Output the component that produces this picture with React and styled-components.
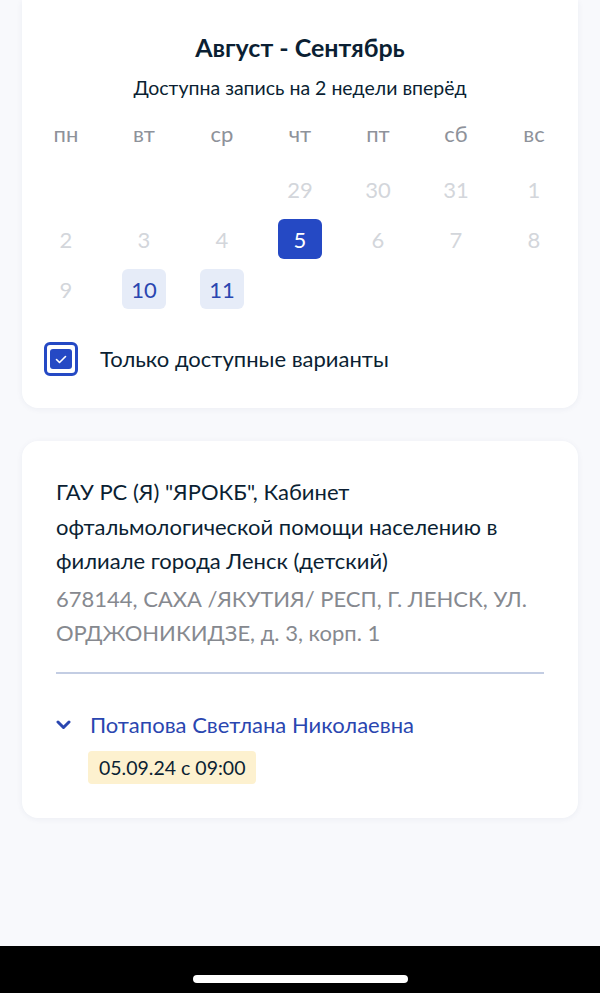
import React from 'react';
import styled, { createGlobalStyle } from 'styled-components';

const GlobalStyle = createGlobalStyle`
  html, body {
    margin: 0;
    padding: 0;
    background: #f8f9fc;
  }
  body {
    font-family: Lato, "Noto Sans", sans-serif;
    color: #0b1f33;
  }
`;

const Screen = styled.div`
  display: flex;
  flex-direction: column;
  height: 993px;
  background: #f8f9fc;
  overflow: hidden;
`;

const Content = styled.div`
  flex: 1;
  display: flex;
  flex-direction: column;
  gap: 33px;
  padding: 0 22px;
`;

const Card = styled.div`
  background: #fff;
  border-radius: ${p => (p.$top ? '0 0 16px 16px' : '16px')};
  box-shadow: 0 1px 6px rgba(30, 50, 100, 0.06);
  padding: ${p => p.$pad};
`;

const Title = styled.div`
  font-size: 25px;
  font-weight: 700;
  line-height: 30px;
  text-align: center;
`;

const Subtitle = styled.div`
  margin-top: 13px;
  font-size: 19.5px;
  line-height: 26px;
  text-align: center;
`;

const Grid = styled.div`
  display: grid;
  grid-template-columns: repeat(7, 44px);
  justify-content: space-between;
  row-gap: 10px;
  margin-top: 20px;
`;

const WeekDay = styled.div`
  font-size: 22px;
  line-height: 26px;
  text-align: center;
  color: #8e929a;
  margin-bottom: 12px;
`;

const Day = styled.div`
  height: 40px;
  border-radius: 6px;
  display: flex;
  align-items: center;
  justify-content: center;
  font-size: 22px;
  color: ${p => (p.$state === 'selected' ? '#fff' : p.$state === 'open' ? '#2a46b0' : '#d3d6db')};
  background: ${p => (p.$state === 'selected' ? '#2549c4' : p.$state === 'open' ? '#e6ecf8' : 'transparent')};
`;

const CheckRow = styled.label`
  display: flex;
  align-items: center;
  gap: 22px;
  margin-top: 33px;
  font-size: 22px;
  line-height: 34px;
`;

const Box = styled.span`
  width: 34px;
  height: 34px;
  box-sizing: border-box;
  border: 3px solid #2549c4;
  border-radius: 6px;
  display: flex;
  align-items: center;
  justify-content: center;
`;

const BoxFill = styled.span`
  width: 22px;
  height: 20px;
  border-radius: 3px;
  background: #2549c4;
  display: flex;
  align-items: center;
  justify-content: center;
`;

const OrgName = styled.div`
  font-size: 22px;
  line-height: 34.5px;
  color: #0b1f33;
`;

const Address = styled.div`
  margin-top: 3px;
  font-size: 22px;
  line-height: 34.5px;
  color: #86898f;
`;

const Divider = styled.div`
  height: 2px;
  background: #c3cde3;
  margin: 21px 0 37px;
`;

const Doctor = styled.div`
  display: flex;
  align-items: center;
  gap: 19px;
  font-size: 22px;
  line-height: 28px;
  color: #2a46b0;
`;

const Slots = styled.div`
  display: flex;
  padding-left: 32px;
  margin-top: 12px;
`;

const Slot = styled.span`
  background: #fdf1cf;
  border-radius: 4px;
  padding: 0 11px;
  font-size: 19.5px;
  line-height: 33px;
  color: #0b1f33;
`;

const HomeBar = styled.div`
  height: 47px;
  background: #000;
  display: flex;
  justify-content: center;
  padding-top: 29px;
  box-sizing: border-box;
`;

const Pill = styled.div`
  width: 215px;
  height: 8px;
  border-radius: 4px;
  background: #fff;
`;

const weekDays = ['пн', 'вт', 'ср', 'чт', 'пт', 'сб', 'вс'];
const days = [
  null, null, null,
  { n: 29 }, { n: 30 }, { n: 31 }, { n: 1 },
  { n: 2 }, { n: 3 }, { n: 4 }, { n: 5, s: 'selected' }, { n: 6 }, { n: 7 }, { n: 8 },
  { n: 9 }, { n: 10, s: 'open' }, { n: 11, s: 'open' },
];

export default function App() {
  return (
    <Screen>
      <GlobalStyle />
      <Content>
        <Card $top $pad="32px 22px 32px">
          <Title>Август - Сентябрь</Title>
          <Subtitle>Доступна запись на 2 недели вперёд</Subtitle>
          <Grid>
            {weekDays.map(w => <WeekDay key={w}>{w}</WeekDay>)}
            {days.map((d, i) => (d ? <Day key={i} $state={d.s}>{d.n}</Day> : <span key={i} />))}
          </Grid>
          <CheckRow>
            <Box>
              <BoxFill>
                <svg width="12" height="9" viewBox="0 0 12 9" fill="none">
                  <path d="M1.5 4.5 L4.5 7.5 L10.5 1.5" stroke="#fff" strokeWidth="1.6" strokeLinecap="round" strokeLinejoin="round" />
                </svg>
              </BoxFill>
            </Box>
            Только доступные варианты
          </CheckRow>
        </Card>
        <Card $pad="34px 34px 34px">
          <OrgName>ГАУ РС (Я) "ЯРОКБ", Кабинет офтальмологической помощи населению в филиале города Ленск (детский)</OrgName>
          <Address>678144, САХА /ЯКУТИЯ/ РЕСП, Г. ЛЕНСК, УЛ. ОРДЖОНИКИДЗЕ, д. 3, корп. 1</Address>
          <Divider />
          <Doctor>
            <svg width="15" height="10" viewBox="0 0 15 10" fill="none">
              <path d="M2 2 L7.5 7.5 L13 2" stroke="#2a46b0" strokeWidth="3" strokeLinecap="round" strokeLinejoin="round" />
            </svg>
            Потапова Светлана Николаевна
          </Doctor>
          <Slots>
            <Slot>05.09.24 с 09:00</Slot>
          </Slots>
        </Card>
      </Content>
      <HomeBar>
        <Pill />
      </HomeBar>
    </Screen>
  );
}
